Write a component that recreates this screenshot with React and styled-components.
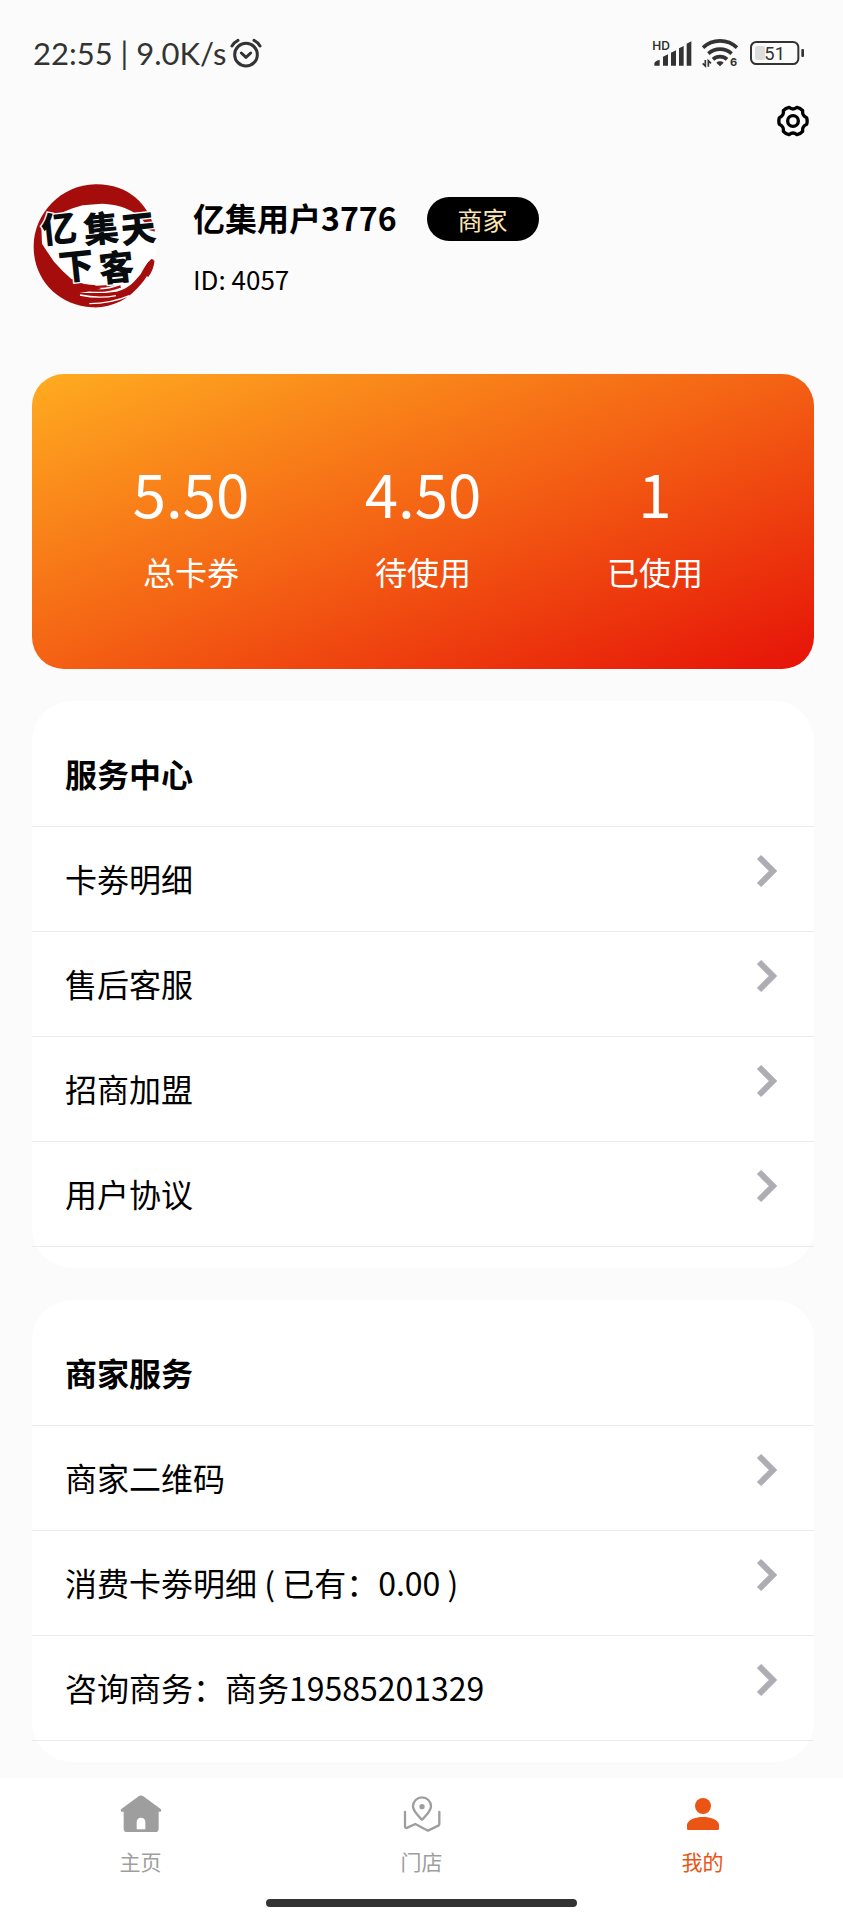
import styled, { createGlobalStyle, ThemeProvider } from "styled-components";

const theme = {
  colors: {
    page: "#fbfbfb",
    line: "#ebebeb",
    muted: "#9e9e9e",
    active: "#ea5514",
    status: "#333",
  },
};

const GlobalStyle = createGlobalStyle`
  * {
    box-sizing: border-box;
  }

  body {
    margin: 0;
    background-color: ${theme.colors.page};
    color: #000;
    font-family: "Noto Sans CJK SC", "Noto Sans", sans-serif;
  }

  button {
    border: none;
    padding: 0;
    background: none;
    color: #000;
    font: inherit;
    cursor: pointer;
  }

  h1, h2, p, ul, dl, dd {
    margin: 0;
    padding: 0;
  }

  ul {
    list-style: none;
  }

  svg {
    display: block;
    flex: none;
  }
`;

const Page = styled.div`
  display: flex;
  flex-direction: column;
  min-height: 100vh;
`;

const StatusBar = styled.div`
  display: flex;
  justify-content: space-between;
  align-items: center;
  height: 74px;
  padding: 32px 38px 0 33px;
  color: ${({ theme }) => theme.colors.status};
`;

const StatusGroup = styled.div`
  display: flex;
  align-items: center;
  gap: ${({ $gap }) => $gap};
  font-family: Lato, sans-serif;
  font-size: 31px;
  line-height: 42px;
`;

const Toolbar = styled.div`
  display: flex;
  justify-content: flex-end;
  padding: 31px 34px 0;
`;

const Main = styled.main`
  flex: 1;
  padding: 46px 29px 14px 32px;
`;

const Profile = styled.section`
  display: flex;
  gap: 33px;
  margin-bottom: 65px;
`;

const ProfileInfo = styled.div`
  padding-top: 14px;
`;

const NameRow = styled.div`
  display: flex;
  align-items: center;
  gap: 30px;
  margin-bottom: 20px;

  h1 {
    padding-bottom: 4px;
    font-size: 32px;
    line-height: 40px;
    font-weight: 700;
  }
`;

const Badge = styled.span`
  padding: 0 31px;
  border-radius: 22px;
  background-color: #000;
  color: #fce4b4;
  font-size: 25px;
  line-height: 44px;
`;

const UserId = styled.p`
  font-size: 26px;
  line-height: 36px;
`;

const Stats = styled.dl`
  display: grid;
  grid-template-columns: repeat(3, 1fr);
  padding: 74px 43px;
  margin-bottom: 32px;
  border-radius: 32px;
  background: linear-gradient(to bottom right, #ffac20, #f35c13 53%, #e61208);
  color: #fff;
  text-align: center;
`;

const Stat = styled.div`
  display: flex;
  flex-direction: column-reverse;

  dt {
    font-size: 32px;
    line-height: 48px;
  }

  dd {
    margin-bottom: 11px;
    font-size: 60px;
    line-height: 88px;
  }
`;

const Card = styled.section`
  padding-bottom: 21px;
  margin-bottom: 32px;
  border-radius: 40px;
  background-color: #fff;

  &:last-child {
    margin-bottom: 0;
  }

  h2 {
    padding: 48px 33px 29px;
    border-bottom: 1px solid ${({ theme }) => theme.colors.line};
    font-size: 32px;
    line-height: 48px;
    font-weight: 700;
  }
`;

const Row = styled.button`
  display: flex;
  justify-content: space-between;
  align-items: flex-start;
  width: 100%;
  height: 105px;
  padding: 27px 36px 0 33px;
  border-bottom: 1px solid ${({ theme }) => theme.colors.line};
  font-size: 32px;
  line-height: 48px;
  text-align: left;
`;

const TabBar = styled.nav`
  padding-top: 14px;
  background-color: #fff;
`;

const Tabs = styled.div`
  display: grid;
  grid-template-columns: repeat(3, 1fr);
`;

const Tab = styled.a`
  display: flex;
  flex-direction: column;
  align-items: center;
  gap: 11px;
  color: ${({ theme, $active }) =>
    $active ? theme.colors.active : theme.colors.muted};
  font-size: 21px;
  line-height: 32px;
  text-decoration: none;
`;

const HomeIndicator = styled.div`
  width: 37%;
  height: 8px;
  margin: 22px auto 13px;
  border-radius: 4px;
  background-color: ${({ theme }) => theme.colors.status};
`;

const AlarmIcon = () => (
  <svg width="32" height="30" viewBox="0 0 96 90" fill="none" stroke="currentColor">
    <circle cx="48" cy="50" r="34" strokeWidth="9" />
    <path d="M34 45l14 13 14-13" strokeWidth="9" strokeLinecap="round" strokeLinejoin="round" />
    <path d="M6 24C10 17 16 11 24 7M90 24C86 17 80 11 72 7" strokeWidth="9" strokeLinecap="round" />
  </svg>
);

const SignalIcon = () => (
  <svg width="40" height="30" viewBox="0 0 120 90" fill="currentColor">
    <text x="1" y="35" fontFamily="Inter, sans-serif" fontSize="36" fontWeight="600">
      HD
    </text>
    <path d="M7 77q0-8 16-12v18H7zM33 56l15-7v34H33zM57 44l15-7v46H57zM81 31l14-7v59H81zM104 17l14-7v73h-14z" />
  </svg>
);

const WifiIcon = () => (
  <svg width="40" height="30" viewBox="0 0 120 90" fill="none" stroke="currentColor">
    <path d="M6 29a74 74 0 0 1 102 0" strokeWidth="11" />
    <path d="M22 47a52 52 0 0 1 70 0" strokeWidth="11" />
    <path d="M36 64a31 31 0 0 1 42 0" strokeWidth="11" />
    <path d="M57 85L46 74a16 16 0 0 1 22 0z" fill="currentColor" stroke="none" />
    <path d="M13 66v18l-8-8M22 86V68l8 8" strokeWidth="5" />
    <text
      x="87"
      y="84"
      fill="currentColor"
      stroke="none"
      fontFamily="Inter, sans-serif"
      fontSize="33"
      fontWeight="700"
    >
      6
    </text>
  </svg>
);

const BatteryIcon = () => (
  <svg width="55" height="24" viewBox="0 0 165 72">
    <rect x="15" y="15" width="30" height="42" rx="6" fill="#ddd" />
    <rect x="3" y="3" width="142" height="66" rx="16" fill="none" stroke="currentColor" strokeWidth="6" />
    <rect x="154" y="24" width="8" height="24" rx="3" fill="currentColor" />
    <text
      x="74"
      y="56"
      fill="currentColor"
      fontFamily="Roboto, sans-serif"
      fontSize="55"
      textAnchor="middle"
    >
      51
    </text>
  </svg>
);

const GearIcon = () => (
  <svg
    width="32"
    height="32"
    viewBox="0 0 96 96"
    fill="none"
    stroke="currentColor"
    strokeWidth="10"
    strokeLinejoin="round"
  >
    <path d="M48 84Q54 84 60 89Q70 87 77 79Q76 71 79 66Q82 61 89 58Q92 48 89 38Q82 35 79 30Q76 25 77 17Q70 9 60 7Q54 12 48 12Q42 12 36 7Q26 9 19 17Q20 25 17 30Q14 35 7 38Q4 48 7 58Q14 61 17 66Q20 71 19 79Q26 87 36 89Q42 84 48 84Z" />
    <circle cx="48" cy="48" r="16" />
  </svg>
);

const ChevronIcon = () => (
  <svg width="22" height="34" viewBox="0 0 22 34" fill="none" stroke="#adadb3" strokeWidth="6">
    <path d="M3 3l14 14L3 31" />
  </svg>
);

const HomeIcon = () => (
  <svg width="42" height="42" viewBox="0 0 126 126" fill="currentColor">
    <path
      fillRule="evenodd"
      d="M56 13q7-5 14 0l52 38q4 4 0 8h-6v51q0 10-10 10H21q-10 0-10-10V59H4q-4-4 0-8zM50 112h26V91q0-14-13-14T50 91z"
    />
  </svg>
);

const StoreIcon = () => (
  <svg
    width="42"
    height="42"
    viewBox="0 0 126 126"
    fill="none"
    stroke="currentColor"
    strokeWidth="7"
    strokeLinecap="round"
    strokeLinejoin="round"
  >
    <path d="M63 83C50 70 36 58 36 43a27 27 0 0 1 54 0c0 15-14 27-27 40z" />
    <circle cx="63" cy="44" r="8" fill="currentColor" stroke="none" />
    <path d="M12 60v43q0 7 7 4l24-11 38 20 31-15q3-2 3-6V60" />
  </svg>
);

const MineIcon = () => (
  <svg width="42" height="42" viewBox="0 0 126 126" fill="currentColor">
    <circle cx="63" cy="42" r="24" />
    <path d="M15 110V97C20 82 41 75 63 75s43 7 48 22v13q0 4-4 4H19q-4 0-4-4z" />
  </svg>
);

// brush circle seal with the shop name on two lines
const AvatarImage = () => (
  <svg width="128" height="126" viewBox="0 0 384 378" role="img" aria-label="亿集天下客">
    <path
      fill="#a50c0c"
      d="M190 4C286 2 350 62 368 140L370 170C373 220 358 266 330 300C290 350 238 376 180 373C80 368 4 290 5 190C6 90 88 6 190 4z"
    />
    <path
      fill="#fff"
      d="M92 88L122 76L152 67L210 62C274 64 334 92 348 140L376 148L372 232L358 228C344 240 334 258 326 274L306 296C280 322 252 326 252 326L220 330L142 330L180 324L208 318L186 306L152 304L118 288L92 264L66 236L44 204L30 182L28 132L54 108z"
    />
    <path
      fill="none"
      stroke="#a50c0c"
      strokeWidth="7"
      d="M118 292Q180 324 246 304M130 310Q200 336 266 310M352 240Q336 262 334 280M364 232Q362 258 346 280"
    />
    <path
      fill="none"
      stroke="#fff"
      strokeWidth="4"
      d="M172 362Q236 362 292 338M144 336Q200 348 252 338"
    />
    <g
      fontFamily='"Noto Sans CJK SC", sans-serif'
      fontWeight="900"
      fontSize="106"
      fill="#080c0e"
      stroke="#fff"
      strokeWidth="8"
      paintOrder="stroke"
    >
      <text x="28" y="176" transform="rotate(-6 82 140)">亿</text>
      <text x="154" y="176" transform="rotate(-6 208 140)">集</text>
      <text x="266" y="176" transform="rotate(-6 320 140)">天</text>
      <text x="80" y="288" transform="rotate(-6 134 250)">下</text>
      <text x="200" y="292" transform="rotate(-6 254 250)">客</text>
    </g>
  </svg>
);

const stats = [
  { label: "总卡券", value: "5.50" },
  { label: "待使用", value: "4.50" },
  { label: "已使用", value: "1" },
];

const sections = [
  {
    title: "服务中心",
    items: ["卡劵明细", "售后客服", "招商加盟", "用户协议"],
  },
  {
    title: "商家服务",
    items: [
      "商家二维码",
      "消费卡劵明细 ( 已有：0.00 )",
      "咨询商务：商务19585201329",
    ],
  },
];

const tabs = [
  { label: "主页", Icon: HomeIcon },
  { label: "门店", Icon: StoreIcon },
  { label: "我的", Icon: MineIcon, active: true },
];

export default function App() {
  return (
    <ThemeProvider theme={theme}>
      <GlobalStyle />
      <Page>
        <StatusBar>
          <StatusGroup $gap="4px">
            <span>22:55 | 9.0K/s</span>
            <AlarmIcon />
          </StatusGroup>
          <StatusGroup $gap="9px">
            <SignalIcon />
            <WifiIcon />
            <BatteryIcon />
          </StatusGroup>
        </StatusBar>
        <Toolbar>
          <button type="button" aria-label="设置">
            <GearIcon />
          </button>
        </Toolbar>
        <Main>
          <Profile>
            <AvatarImage />
            <ProfileInfo>
              <NameRow>
                <h1>亿集用户3776</h1>
                <Badge>商家</Badge>
              </NameRow>
              <UserId>ID: 4057</UserId>
            </ProfileInfo>
          </Profile>
          <Stats>
            {stats.map(({ label, value }) => (
              <Stat key={label}>
                <dt>{label}</dt>
                <dd>{value}</dd>
              </Stat>
            ))}
          </Stats>
          {sections.map(({ title, items }) => (
            <Card key={title}>
              <h2>{title}</h2>
              <ul>
                {items.map((item) => (
                  <li key={item}>
                    <Row type="button">
                      <span>{item}</span>
                      <ChevronIcon />
                    </Row>
                  </li>
                ))}
              </ul>
            </Card>
          ))}
        </Main>
        <TabBar>
          <Tabs>
            {tabs.map(({ label, Icon, active }) => (
              <Tab key={label} href="#" $active={active}>
                <Icon />
                {label}
              </Tab>
            ))}
          </Tabs>
          <HomeIndicator />
        </TabBar>
      </Page>
    </ThemeProvider>
  );
}
